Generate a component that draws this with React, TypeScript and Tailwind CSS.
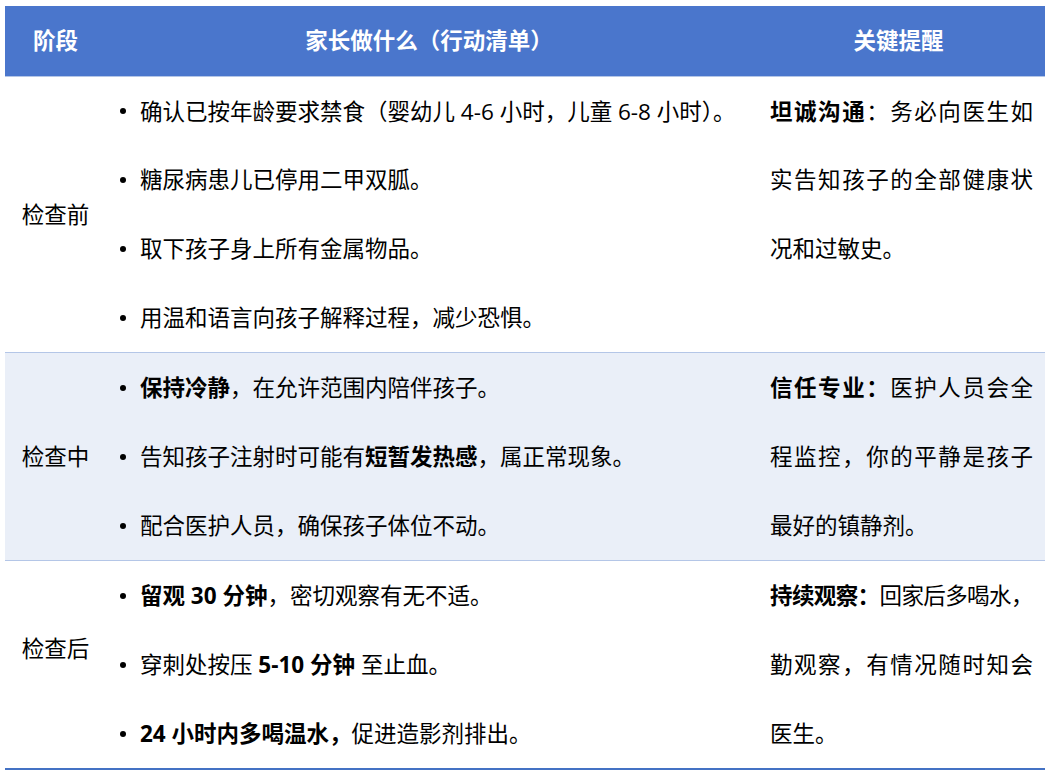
import React from "react";

const font = { fontFamily: '"Open Sans", "Noto Sans CJK SC", sans-serif' };

function Bullet({ children }: { children: React.ReactNode }) {
  return (
    <div className="flex items-center h-[69px]">
      <div className="w-[6px] h-[6px] rounded-full bg-black ml-[14px] mr-[14px] shrink-0" />
      <div className="whitespace-nowrap">{children}</div>
    </div>
  );
}

function J({
  children,
  last,
  tight,
}: {
  children: React.ReactNode;
  last?: boolean;
  tight?: boolean;
}) {
  return (
    <div
      className={
        "h-[69px] flex items-center whitespace-nowrap " +
        (last ? "" : "justify-between ") +
        (tight ? "tracking-[-0.6px]" : "")
      }
    >
      {children}
    </div>
  );
}

function chars(s: string, bold?: boolean) {
  return Array.from(s).map((c, i) => (
    <span key={i} className={bold ? "font-bold" : ""}>
      {c}
    </span>
  ));
}

export default function App() {
  return (
    <div className="w-[1058px] h-[774px] bg-white pt-[6px] pl-[5px]" style={font}>
      <div className="w-[1040px] text-[22.5px] text-black">
        {/* header */}
        <div className="grid grid-cols-[101px_646px_293px] h-[71px] bg-[#4a76cc] text-white font-bold items-center border-b border-[#b4c6e7]">
          <div className="text-center">阶段</div>
          <div className="text-center">家长做什么（行动清单）</div>
          <div className="text-center">关键提醒</div>
        </div>

        {/* row 1 */}
        <div className="grid grid-cols-[101px_646px_293px] border-b border-[#b4c6e7]">
          <div className="flex items-center justify-center">检查前</div>
          <div className="[&>div]:h-[68.75px]">
            <Bullet>确认已按年龄要求禁食（婴幼儿 4-6 小时，儿童 6-8 小时）。</Bullet>
            <Bullet>糖尿病患儿已停用二甲双胍。</Bullet>
            <Bullet>取下孩子身上所有金属物品。</Bullet>
            <Bullet>用温和语言向孩子解释过程，减少恐惧。</Bullet>
          </div>
          <div className="pl-[18px] pr-[12px] [&>div]:h-[68.75px]">
            <J>
              {chars("坦诚沟通", true)}
              {chars("：务必向医生如")}
            </J>
            <J>{chars("实告知孩子的全部健康状")}</J>
            <J last>况和过敏史。</J>
          </div>
        </div>

        {/* row 2 */}
        <div className="grid grid-cols-[101px_646px_293px] bg-[#eaeff8] border-b border-[#b4c6e7]">
          <div className="flex items-center justify-center">检查中</div>
          <div>
            <Bullet>
              <b>保持冷静</b>，在允许范围内陪伴孩子。
            </Bullet>
            <Bullet>
              告知孩子注射时可能有<b>短暂发热感</b>，属正常现象。
            </Bullet>
            <Bullet>配合医护人员，确保孩子体位不动。</Bullet>
          </div>
          <div className="pl-[18px] pr-[12px]">
            <J>
              {chars("信任专业：", true)}
              {chars("医护人员会全")}
            </J>
            <J>{chars("程监控，你的平静是孩子")}</J>
            <J last>最好的镇静剂。</J>
          </div>
        </div>

        {/* row 3 */}
        <div className="grid grid-cols-[101px_646px_293px] border-b-2 border-[#4472c4]">
          <div className="flex items-center justify-center pb-[32px]">检查后</div>
          <div>
            <Bullet>
              <b>留观 30 分钟</b>，密切观察有无不适。
            </Bullet>
            <Bullet>
              穿刺处按压 <b>5-10 分钟</b> 至止血。
            </Bullet>
            <Bullet>
              <b>24 小时内多喝温水，</b>促进造影剂排出。
            </Bullet>
          </div>
          <div className="pl-[18px] pr-[12px]">
            <J last tight>
              <span className="font-bold">持续观察：</span>回家后多喝水，
            </J>
            <J>{chars("勤观察，有情况随时知会")}</J>
            <J last>医生。</J>
          </div>
        </div>
      </div>
    </div>
  );
}
